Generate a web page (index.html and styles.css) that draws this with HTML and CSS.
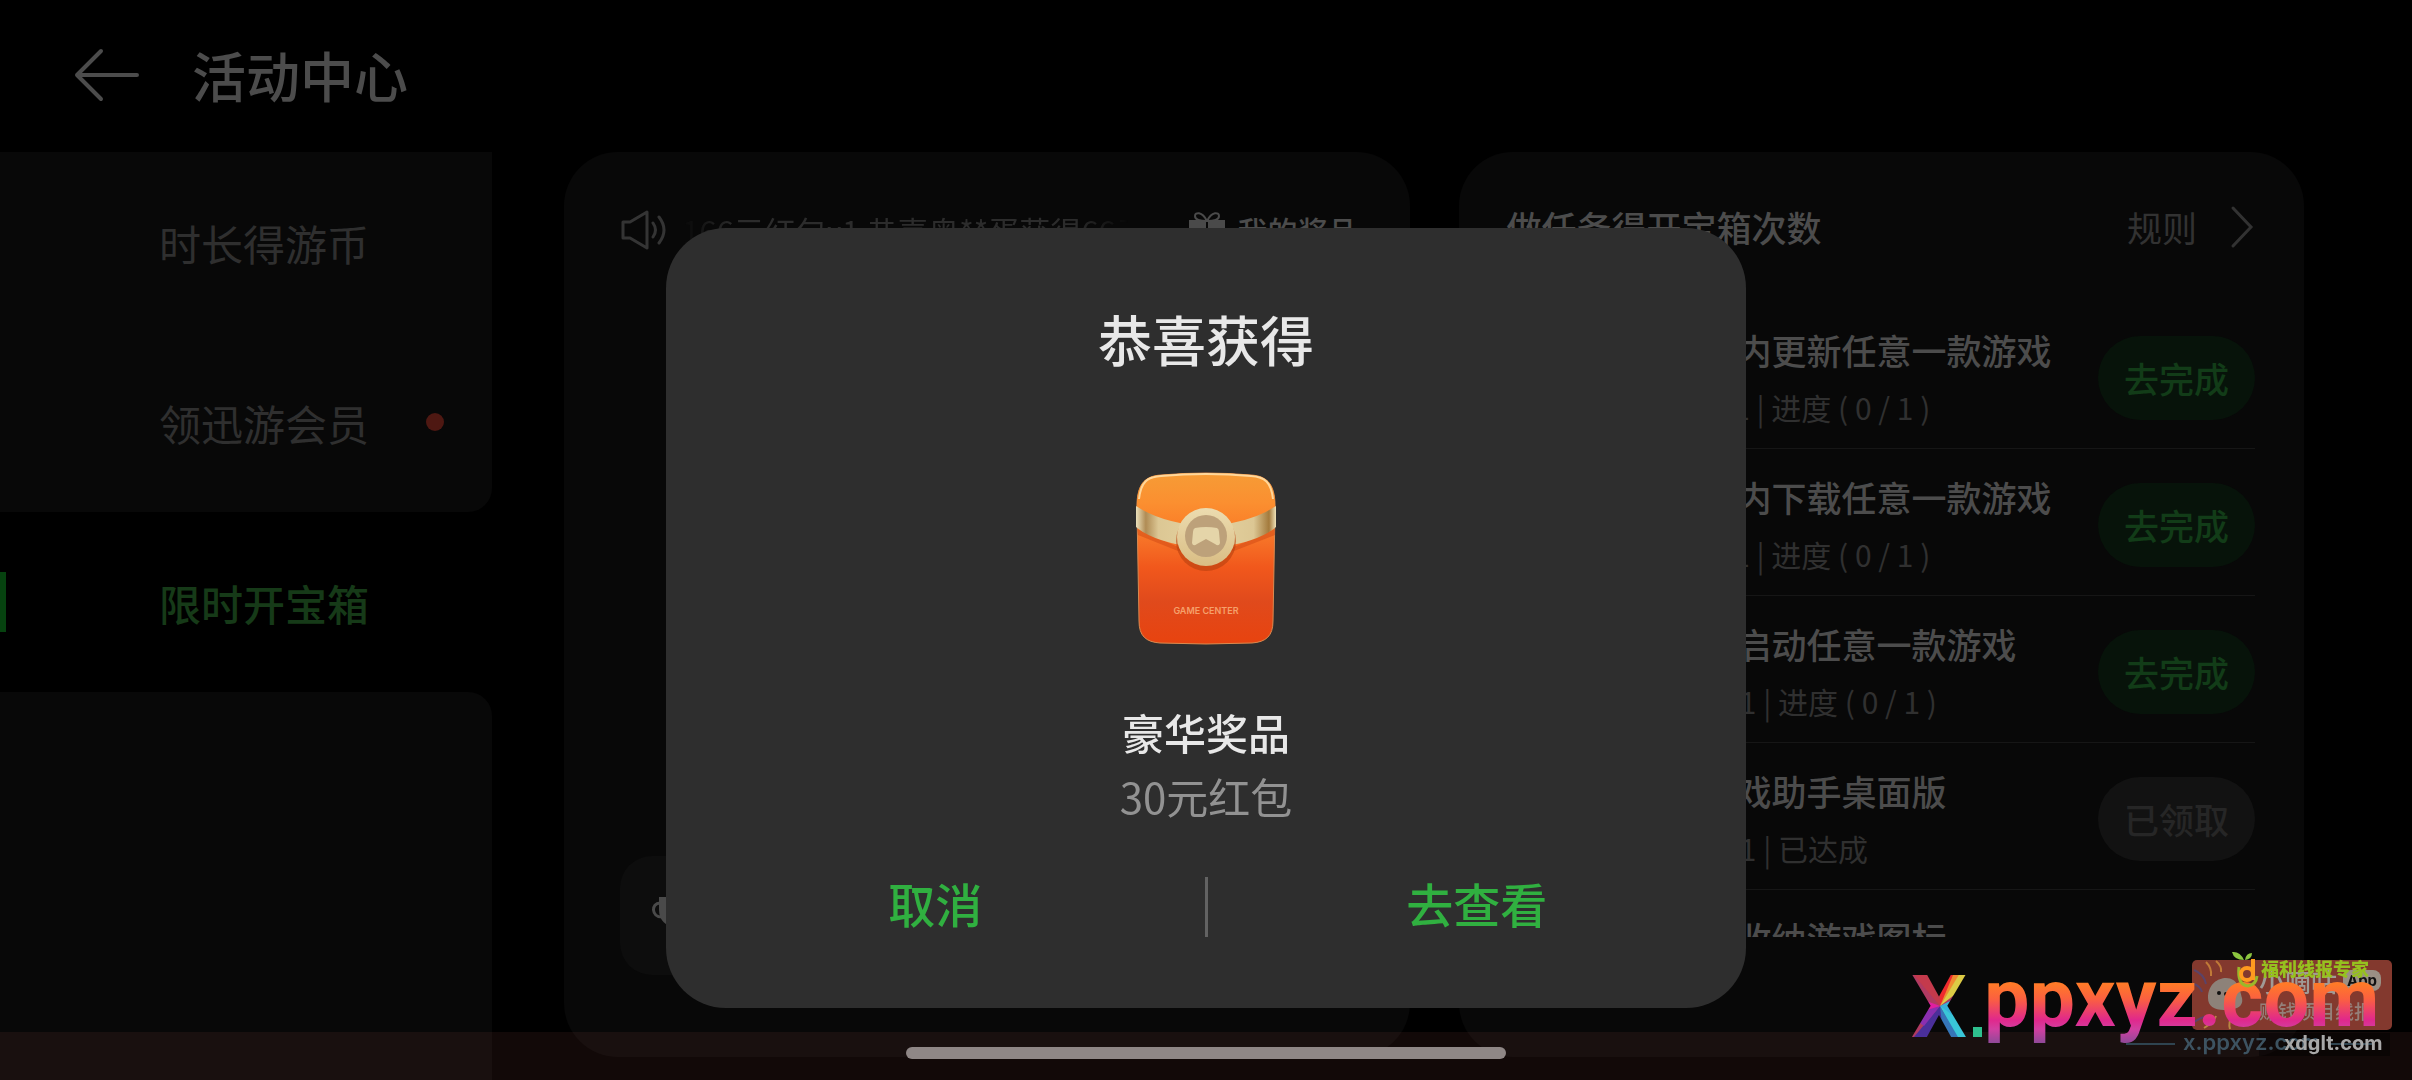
FILE: index.html
```html
<!DOCTYPE html>
<html lang="zh-CN">
  <head>
    <meta charset="UTF-8" />
    <meta name="viewport" content="width=device-width, initial-scale=1.0" />
    <title>活动中心</title>
    <link rel="stylesheet" href="styles.css">
  </head>
  <body>

    <header class="top-bar">
      <button class="back" aria-label="返回">
        <svg width="66" height="54" viewBox="0 0 66 54">
          <path d="M27 3 L3 27 L27 51 M3 27 H63" />
        </svg>
      </button>
      <h1>活动中心</h1>
    </header>

    <div class="content">
      <nav class="sidebar">
        <div class="nav-group nav-top">
          <a href="#time">时长得游币</a>
          <a href="#vip">领迅游会员<span class="dot"></span></a>
        </div>
        <a href="#box" class="active">限时开宝箱</a>
        <div class="nav-group nav-rest"></div>
      </nav>

      <main class="cards">
        <section class="card prize-card">
          <div class="card-head">
            <svg class="speaker" width="48" height="40" viewBox="0 0 48 40">
              <path d="M3 12 V28 H10 L27 38 V2 L10 12 Z M33 13 Q38 20 33 27 M39 7 Q49 20 39 33" />
            </svg>
            <p class="ticker">166元红包x1 恭喜奥**蛋获得66元</p>
            <a href="#prizes" class="my-prizes">
              <svg width="38" height="38" viewBox="0 0 38 38">
                <path class="bow" d="M19 10 C14 0 7 1 7 5 C7 9 13 10 19 10 C25 10 31 9 31 5 C31 1 24 0 19 10" />
                <path d="M1 9 H18 V18 H1 Z M20 9 H37 V18 H20 Z M3 20 H18 V37 H3 Z M20 20 H35 V37 H20 Z" />
              </svg>
              我的奖品
            </a>
          </div>
          <button class="trophy" aria-label="奖杯">
            <svg width="48" height="48" viewBox="0 0 48 48">
              <path class="ears" d="M9 11 C0 11 0 25 11 25 M39 11 C48 11 48 25 37 25" />
              <path d="M8 5 H40 V18 C40 29 32 34 26 35 V40 H31 V44 H17 V40 H22 V35 C16 34 8 29 8 18 Z" />
            </svg>
          </button>
        </section>

        <section class="card task-card">
          <div class="task-head">
            <h2>做任务得开宝箱次数</h2>
            <a href="#rules">规则
              <svg width="26" height="44" viewBox="0 0 26 44"><path d="M4 3 L22 22 L4 41" /></svg>
            </a>
          </div>
          <ul class="tasks">
            <li>
              <div>
                <h3>每日1次在应用内更新任意一款游戏</h3>
                <p>可得开宝箱次数+1 | 进度 ( 0 / 1 )</p>
              </div>
              <button>去完成</button>
            </li>
            <li>
              <div>
                <h3>每日1次在应用内下载任意一款游戏</h3>
                <p>可得开宝箱次数+1 | 进度 ( 0 / 1 )</p>
              </div>
              <button>去完成</button>
            </li>
            <li>
              <div>
                <h3>每日1次在应用启动任意一款游戏</h3>
                <p>可得开宝箱次数 +1 | 进度 ( 0 / 1 )</p>
              </div>
              <button>去完成</button>
            </li>
            <li>
              <div>
                <h3>安装1次手机游戏助手桌面版</h3>
                <p>可得开宝箱次数 +1 | 已达成</p>
              </div>
              <button class="done">已领取</button>
            </li>
            <li>
              <div>
                <h3>桌面1次点击可收纳游戏图标</h3>
              </div>
            </li>
          </ul>
        </section>
      </main>
    </div>

    <div class="overlay">
      <div class="modal" role="dialog" aria-labelledby="modal-title">
        <h2 id="modal-title">恭喜获得</h2>
        <svg class="envelope" width="144" height="176" viewBox="0 0 144 176">
          <defs>
            <linearGradient id="body" x1="0" y1="0" x2="0" y2="1">
              <stop offset="0" stop-color="#fb9a35" />
              <stop offset="0.35" stop-color="#f8792a" />
              <stop offset="0.55" stop-color="#f1581c" />
              <stop offset="0.75" stop-color="#e04a1c" />
              <stop offset="1" stop-color="#e8430f" />
            </linearGradient>
            <linearGradient id="flap" x1="0" y1="0" x2="0" y2="1">
              <stop offset="0" stop-color="#f69c36" />
              <stop offset="0.5" stop-color="#fb8f30" />
              <stop offset="1" stop-color="#fa7a26" />
            </linearGradient>
            <linearGradient id="band" x1="0" y1="0" x2="1" y2="0">
              <stop offset="0" stop-color="#e9dfba" />
              <stop offset="0.07" stop-color="#b08c55" />
              <stop offset="0.16" stop-color="#dcc794" />
              <stop offset="0.5" stop-color="#e5d3a0" />
              <stop offset="0.84" stop-color="#dcc794" />
              <stop offset="0.95" stop-color="#a37a3c" />
              <stop offset="1" stop-color="#eee2b8" />
            </linearGradient>
            <linearGradient id="ring" x1="0" y1="0" x2="0" y2="1">
              <stop offset="0" stop-color="#ecdcb0" />
              <stop offset="1" stop-color="#d9bd84" />
            </linearGradient>
          </defs>
          <path fill="url(#body)" stroke="#d98a50" d="M3 40 C2 14 10 5 27 4 Q72 0 117 4 C134 5 142 14 141 40 L139 150 C139 165 132 171 118 172 Q72 174 26 172 C12 171 5 165 5 150 Z" />
          <path fill="url(#flap)" d="M3 38 C2 14 10 5 27 4 Q72 0 117 4 C134 5 142 14 141 38 L104 54 L72 62 L40 54 Z" />
          <path fill="none" stroke="#ffd79a" stroke-width="2" d="M5 28 C7 11 13 6 27 5 Q72 1 117 5 C131 6 137 11 139 28" />
          <path fill="#cf4713" opacity="0.5" d="M3 58 L44 76 H100 L141 58 V64 L100 80 H44 L4 64 Z" />
          <path fill="url(#band)" d="M2 35 Q20 47 46 52 L72 56 L98 52 Q124 47 142 35 V56 Q128 68 98 74 L72 78 L46 74 Q16 68 2 56 Z" />
          <circle cx="72" cy="70" r="30" fill="#b8400f" opacity="0.6" />
          <circle cx="72" cy="66" r="29" fill="url(#ring)" />
          <circle cx="72" cy="65" r="21" fill="#bda17a" />
          <path fill="#e5d5a9" d="M61 57 Q72 55 83 57 Q85 58 85 61 L86 72 Q85 76 81 73 L72 68 L63 73 Q59 76 58 72 L59 61 Q59 58 61 57 Z" />
          <text x="72" y="143" class="envelope-text">GAME CENTER</text>
        </svg>
        <p class="prize-level">豪华奖品</p>
        <p class="prize-name">30元红包</p>
        <div class="modal-actions">
          <button>取消</button>
          <button>去查看</button>
        </div>
      </div>
    </div>

    <div class="nav-bar"><span class="home-indicator"></span></div>

    <svg class="watermark" width="500" height="120" viewBox="0 0 500 120">
      <defs>
        <linearGradient id="sunset" gradientUnits="userSpaceOnUse" x1="0" y1="36" x2="0" y2="96">
          <stop offset="0" stop-color="#ff7a28" />
          <stop offset="0.25" stop-color="#fb6040" />
          <stop offset="0.6" stop-color="#e0288c" />
          <stop offset="0.75" stop-color="#d23fa0" />
          <stop offset="1" stop-color="#8a4a98" />
        </linearGradient>
        <clipPath id="x-clip"><text x="11" y="89" class="wm-x">X</text></clipPath>
      </defs>

      <!-- app badge -->
      <rect x="292" y="12" width="200" height="70" rx="5" fill="#83392e" />
      <g fill="none" stroke-width="2">
        <path stroke="#c07a38" d="M306 14 Q312 20 311 28 M316 13 Q322 18 321 24" />
        <path stroke="#5b4368" d="M294 22 Q304 26 306 36 M294 36 Q300 38 302 44 M294 74 Q306 66 310 70" />
        <path stroke="#b98742" d="M304 80 Q314 74 316 68 M330 81 Q328 74 332 70" />
      </g>
      <path fill="#8d8279" d="M308 50 C308 36 318 30 326 30 C338 30 340 42 342 50 C344 60 334 62 324 62 C314 62 308 58 308 50 Z" />
      <circle cx="319" cy="45" r="2" fill="#111" />
      <circle cx="326" cy="46" r="2" fill="#111" />
      <text x="359" y="44" class="wm-name">小嘀咕</text>
      <rect x="443" y="22" width="38" height="21" rx="8" fill="#9b9085" />
      <text x="462" y="38" class="wm-app">App</text>
      <text x="359" y="71" class="wm-slogan">赚钱项目线报</text>

      <!-- big address -->
      <g clip-path="url(#x-clip)">
        <rect x="8" y="20" width="64" height="76" fill="#b03a62" />
        <path fill="#c43a4c" d="M40 58 L8 20 H40 Z" />
        <path fill="#ee2a2e" d="M40 58 L40 20 H58 Z" />
        <path fill="#f08a30" d="M40 58 L56 20 H64 Z" />
        <path fill="#dccb45" d="M40 58 L63 20 H76 V30 Z" />
        <path fill="#38b0d8" d="M40 58 L76 40 V96 H64 Z" />
        <path fill="#39c6d8" d="M40 58 L76 84 V96 H60 Z" />
        <path fill="#3575b8" d="M40 58 L62 96 H40 Z" />
        <path fill="#4a2f9a" d="M40 58 L44 96 H8 Z" />
        <path fill="#8a2fb0" d="M40 58 L24 78 L8 66 Z" />
        <path fill="#e01fa0" d="M40 58 L8 68 V46 Z" />
      </g>
      <rect x="73" y="79" width="9" height="10" fill="#2ec08e" />
      <text x="84" y="78" class="wm-big">ppxyz.com</text>

      <!-- leaf logo -->
      <path fill="#8cc63f" d="M332 4 Q340 3 344 12 Q334 12 332 4 Z M345 12 Q346 5 352 5 Q352 11 345 12 Z" />
      <path fill="none" stroke="#9ab82a" stroke-width="3" d="M339 19 Q337 37 348 38 Q356 37 357 28" />
      <circle cx="347" cy="26" r="6" fill="none" stroke="#ff9a1f" stroke-width="4" />
      <path stroke="#ff9a1f" stroke-width="4" d="M353 11 V32" />
      <text x="361" y="28" class="wm-expert">福利线报专家</text>

      <!-- small addresses -->
      <rect x="359" y="85" width="131" height="23" fill="#000" opacity="0.4" />
      <path stroke="#2f4450" stroke-width="2" d="M226 96 H275 M430 96 H472" />
      <text x="283" y="102" class="wm-small">x.ppxyz.com</text>
      <text x="384" y="102" class="wm-alt">xdglt.com</text>
    </svg>

  </body>
</html>
```

FILE: styles.css
```css
* {
  box-sizing: border-box;
}

body {
  margin: 0;
  height: 100vh;
  display: flex;
  flex-direction: column;
  overflow: hidden;
  background: #000;
  color: #4c4c4c;
  font-family: "Noto Sans CJK SC", sans-serif;
}

h1, h2, h3, p, ul {
  margin: 0;
  padding: 0;
  font-weight: 500;
}

ul {
  list-style: none;
}

a {
  color: inherit;
  text-decoration: none;
}

button {
  padding: 0;
  border: none;
  background: none;
  color: inherit;
  font-family: inherit;
  cursor: pointer;
}

svg {
  display: block;
}

/* header */
.top-bar {
  height: 152px;
  padding: 0 74px 2px;
  display: flex;
  align-items: center;
  gap: 52px;
}

.back path {
  fill: none;
  stroke: #4c4c4c;
  stroke-width: 4;
  stroke-linecap: round;
  stroke-linejoin: round;
}

.top-bar h1 {
  font-size: 54px;
  line-height: 60px;
}

.content {
  flex: 1;
  min-height: 0;
  display: flex;
  gap: 72px;
}

/* sidebar */
.sidebar {
  width: 492px;
  flex-shrink: 0;
  display: flex;
  flex-direction: column;
}

.sidebar a {
  height: 180px;
  padding: 0 48px 0 159px;
  display: flex;
  align-items: center;
  justify-content: space-between;
  font-size: 42px;
  color: #2f2f2f;
}

.nav-group {
  background: #080808;
}

.nav-top {
  border-radius: 0 0 24px 0;
}

.nav-rest {
  flex: 1;
  border-radius: 0 24px 0 0;
}

.dot {
  width: 18px;
  height: 18px;
  border-radius: 50%;
  background: #4e1812;
}

.sidebar .active {
  padding-left: 0;
  justify-content: flex-start;
  gap: 153px;
  color: #163a18;
  font-weight: 500;
}

.active::before {
  content: "";
  width: 6px;
  height: 60px;
  background: #06420f;
}

/* cards */
.cards {
  flex: 1;
  display: grid;
  grid-template-columns: 1fr 1fr;
  gap: 49px;
  padding: 0 108px 23px 0;
  min-height: 0;
}

.card {
  min-height: 0;
  border-radius: 54px;
  background: #080808;
  display: flex;
  flex-direction: column;
}

.prize-card {
  padding: 53px 52px 82px 56px;
  justify-content: space-between;
}

.card-head {
  height: 50px;
  display: flex;
  align-items: center;
}

.speaker {
  margin-right: 14px;
}

.speaker path {
  fill: none;
  stroke: #343434;
  stroke-width: 3;
  stroke-linejoin: round;
  stroke-linecap: round;
}

.ticker {
  flex: 1;
  margin-right: 60px;
  overflow: hidden;
  white-space: nowrap;
  font-size: 31px;
  font-weight: 400;
  color: #2c2c2c;
  mask-image: linear-gradient(to right, transparent, #000 12%, #000 88%, transparent);
}

.my-prizes {
  display: flex;
  align-items: center;
  gap: 12px;
  font-size: 30px;
  font-weight: 500;
}

.my-prizes path {
  fill: #4a4a4a;
}

.my-prizes .bow {
  fill: none;
  stroke: #4a4a4a;
  stroke-width: 2;
}

.trophy {
  width: 144px;
  height: 119px;
  border-radius: 32px;
  background: #0d0d0d;
  display: flex;
  align-items: center;
  padding-left: 31px;
}

.trophy path {
  fill: #4a4a4a;
}

.trophy .ears {
  fill: none;
  stroke: #4a4a4a;
  stroke-width: 3;
}

.task-card {
  padding: 50px 49px 120px 48px;
}

.task-head {
  display: flex;
  justify-content: space-between;
  align-items: center;
  margin-bottom: 50px;
  font-size: 35px;
  line-height: 50px;
}

.task-head h2 {
  font-size: 35px;
}

.task-head a {
  display: flex;
  align-items: center;
  gap: 32px;
  color: #323232;
}

.task-head path {
  fill: none;
  stroke: #323232;
  stroke-width: 3;
  stroke-linecap: round;
}

.tasks {
  flex: 1;
  min-height: 0;
  overflow: hidden;
}

.tasks li {
  height: 147px;
  padding-top: 24px;
  display: flex;
  justify-content: space-between;
  align-items: flex-start;
  border-bottom: 1px solid #161616;
}

.tasks h3 {
  font-size: 35px;
  line-height: 48px;
}

.tasks p {
  margin-top: 9px;
  font-size: 30px;
  line-height: 48px;
  font-weight: 400;
  color: #303030;
}

.tasks button {
  width: 157px;
  height: 84px;
  margin-top: 10px;
  padding-bottom: 2px;
  border-radius: 42px;
  background: #07130a;
  color: #123c18;
  font-size: 35px;
  font-weight: 500;
}

.tasks .done {
  background: #121212;
  color: #262626;
}

/* dialog */
.overlay {
  position: fixed;
  inset: 0;
  display: flex;
  justify-content: center;
  align-items: flex-end;
  padding-bottom: 72px;
}

.modal {
  width: 1080px;
  max-width: 90%;
  padding: 81px 0 71px;
  border-radius: 60px;
  background: #2e2e2e;
  color: #e8e8e8;
  display: flex;
  flex-direction: column;
  align-items: center;
}

.modal h2 {
  font-size: 54px;
  line-height: 60px;
}

.envelope {
  margin: 102px 0 53px;
}

.envelope-text {
  font-family: Inter, sans-serif;
  font-size: 9px;
  font-weight: 600;
  text-anchor: middle;
  fill: #f5a06c;
}

.prize-level,
.prize-name {
  font-size: 42px;
  line-height: 64px;
}

.prize-name {
  font-weight: 400;
  color: #929292;
}

.modal-actions {
  width: 100%;
  margin-top: 49px;
  display: flex;
}

.modal-actions button {
  flex: 1;
  height: 60px;
  padding-bottom: 8px;
  font-size: 47px;
  line-height: 52px;
  font-weight: 500;
  color: #30b040;
}

.modal-actions button + button {
  border-left: 3px solid #626262;
}

/* system gesture bar */
.nav-bar {
  position: fixed;
  left: 0;
  right: 0;
  bottom: 0;
  height: 48px;
  display: flex;
  justify-content: center;
  align-items: center;
  padding-bottom: 6px;
  background: rgba(255, 130, 110, 0.07);
}

.home-indicator {
  width: 600px;
  height: 12px;
  border-radius: 6px;
  background: #8f8786;
}

/* watermark */
.watermark {
  position: fixed;
  right: 12px;
  bottom: 12px;
}

.wm-x,
.wm-big {
  font-family: Roboto, sans-serif;
  font-weight: 700;
}

.wm-x {
  font-size: 88px;
}

.wm-big {
  font-size: 81px;
  fill: url(#sunset);
}

.wm-name {
  font-size: 26px;
  font-weight: 500;
  fill: #a09a96;
}

.wm-app {
  font-family: Inter, sans-serif;
  font-size: 15px;
  font-weight: 700;
  text-anchor: middle;
  fill: #111;
}

.wm-slogan {
  font-size: 19px;
  font-weight: 500;
  fill: #94807a;
}

.wm-expert {
  font-size: 18px;
  font-weight: 900;
  fill: #96c11f;
}

.wm-small {
  font-family: Inter, sans-serif;
  font-size: 22px;
  font-weight: 600;
  fill: #3d5361;
}

.wm-alt {
  font-family: Inter, sans-serif;
  font-size: 20px;
  font-weight: 700;
  fill: #a8a8a8;
}
```
